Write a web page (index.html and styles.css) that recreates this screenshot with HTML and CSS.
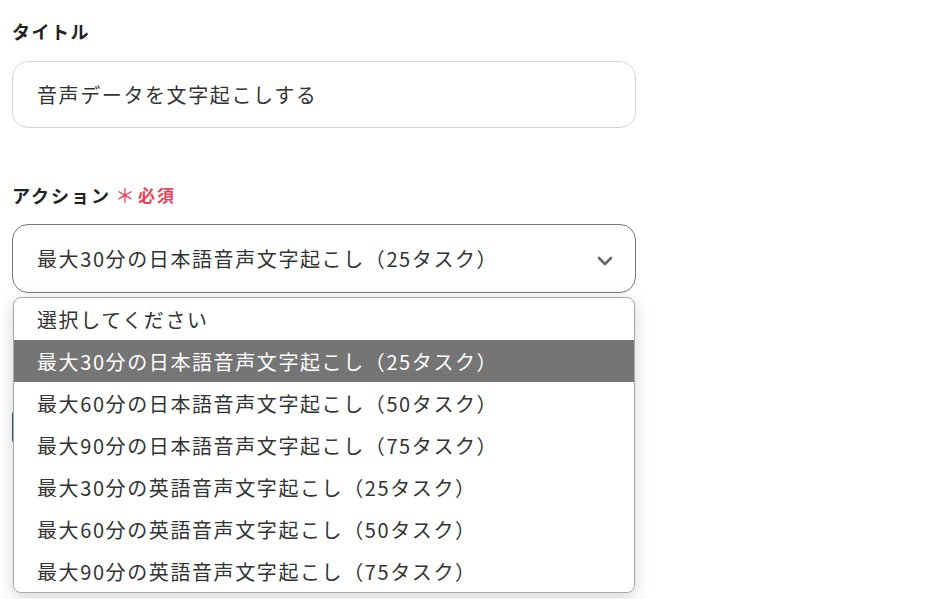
FILE: index.html
```html
<!DOCTYPE html>
<html lang="ja">
<head>
<meta charset="utf-8">
<link rel="stylesheet" href="styles.css">
</head>
<body>
<div class="form">
  <div class="field">
    <div class="label">タイトル</div>
    <div class="input">音声データを文字起こしする</div>
  </div>
  <div class="field field-action">
    <div class="label">アクション<span class="req-mark">＊</span><span class="req">必須</span></div>
    <div class="select-wrap">
      <div class="select">
        <span>最大30分の日本語音声文字起こし（25タスク）</span>
        <svg class="chevron" width="16" height="10" viewBox="0 0 16 10"><path d="M2 2 L8 8 L14 2" fill="none" stroke="#666" stroke-width="2.6" stroke-linecap="round" stroke-linejoin="round"/></svg>
      </div>
      <ul class="menu">
        <li>選択してください</li>
        <li class="active">最大30分の日本語音声文字起こし（25タスク）</li>
        <li>最大60分の日本語音声文字起こし（50タスク）</li>
        <li>最大90分の日本語音声文字起こし（75タスク）</li>
        <li>最大30分の英語音声文字起こし（25タスク）</li>
        <li>最大60分の英語音声文字起こし（50タスク）</li>
        <li>最大90分の英語音声文字起こし（75タスク）</li>
      </ul>
    </div>
    <div class="button"></div>
  </div>
</div>
</body>
</html>
```
FILE: styles.css
```css
html, body {
  margin: 0;
  padding: 0;
  background: #fff;
}
body {
  min-height: 599px;
  font-family: "Noto Sans CJK JP", "Noto Sans", sans-serif;
  color: #333;
}
.form {
  width: 624px;
  padding: 16px 0 0 12px;
}
.label {
  font-size: 18px;
  font-weight: 700;
  letter-spacing: 1.5px;
  color: #222;
  line-height: 30px;
  display: flex;
  align-items: center;
}
.field-action .label {
  letter-spacing: 2px;
}
.req-mark {
  color: #e8455a;
  font-size: 20px;
  font-weight: 400;
  margin-left: 4px;
  letter-spacing: 0;
}
.req {
  color: #e8455a;
  font-size: 17px;
  margin-left: 3px;
  letter-spacing: 2px;
}
.input {
  margin-top: 15px;
  height: 65px;
  border: 1px solid #d3d7de;
  border-radius: 16px;
  display: flex;
  align-items: center;
  padding-left: 24px;
  font-size: 20px;
  letter-spacing: 1.6px;
  color: #333;
}
.field-action {
  margin-top: 52px;
}
.select-wrap {
  position: relative;
  margin-top: 14px;
}
.select {
  height: 67px;
  border: 1px solid #777;
  border-radius: 16px;
  display: flex;
  align-items: center;
  justify-content: space-between;
  padding: 0 22px 0 24px;
  font-size: 20px;
  letter-spacing: 1.6px;
  color: #333;
}
.chevron {
  margin-top: 4px;
}
.menu {
  position: absolute;
  top: 73px;
  left: 1px;
  width: 620px;
  margin: 0;
  padding: 0;
  list-style: none;
  background: #fff;
  border: 1px solid #aaa;
  border-radius: 8px;
  box-shadow: 0 4px 16px rgba(0, 0, 0, 0.18);
  z-index: 2;
  overflow: hidden;
}
.menu li {
  height: 42px;
  display: flex;
  align-items: center;
  padding-left: 23px;
  font-size: 20px;
  letter-spacing: 1.6px;
  color: #333;
}
.menu li.active {
  background: #757575;
  color: #fff;
}
.button {
  margin-top: 114px;
  width: 200px;
  height: 40px;
  background: #1f5f6b;
  border-radius: 8px;
}
```
